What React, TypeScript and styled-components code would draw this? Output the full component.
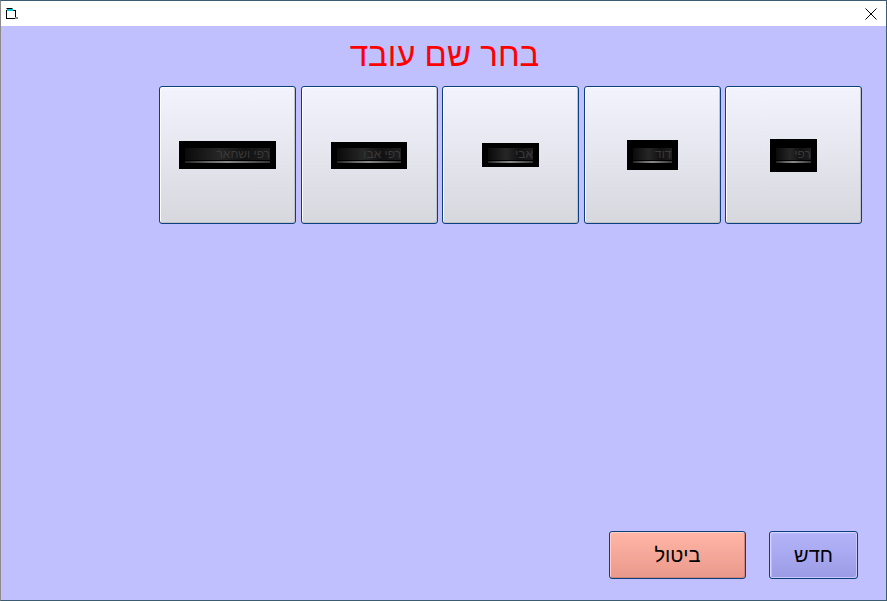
import React from "react";
import styled, { createGlobalStyle } from "styled-components";

const Global = createGlobalStyle`
  html, body { margin: 0; padding: 0; background: #ffffff; }
  body { font-family: "Liberation Sans", "DejaVu Sans", Arial, sans-serif; }
`;

const Window = styled.div`
  box-sizing: border-box;
  width: 887px;
  height: 601px;
  border: 1px solid #3c5a70;
  border-left-color: #8a8a8a;
  display: flex;
  flex-direction: column;
  background: #c0c0ff;
  overflow: hidden;
`;

const TitleBar = styled.div`
  height: 25px;
  flex: none;
  background: #ffffff;
  display: flex;
  align-items: center;
  justify-content: space-between;
  padding: 0 8px 0 4px;
`;

const CloseBtn = styled.div`
  width: 14px;
  height: 14px;
  display: flex;
  align-items: center;
  justify-content: center;
`;

const Content = styled.div`
  flex: 1;
  display: flex;
  flex-direction: column;
`;

const Heading = styled.div`
  direction: rtl;
  text-align: center;
  color: #ff0000;
  font-size: 33px;
  line-height: 36px;
  margin-top: 11px;
  padding-left: 2px;
`;

const EmployeeRow = styled.div`
  display: flex;
  flex-direction: row-reverse;
  gap: 4.5px;
  padding-right: 24px;
  margin-top: 13px;
`;

const EmployeeButton = styled.button`
  box-sizing: border-box;
  width: 137px;
  height: 138px;
  border: 1px solid #0d3f7c;
  border-radius: 3px;
  background: linear-gradient(#f2f3fd, #d7d8de);
  box-shadow: inset -1px -1px 0 #c0c2c8, inset 1px 1px 0 #ffffff;
  display: flex;
  align-items: center;
  justify-content: center;
  padding: 0;
`;

const NameImage = styled.div<{ $w: number; $h: number }>`
  width: ${(p) => p.$w}px;
  height: ${(p) => p.$h}px;
  background: #000;
  display: flex;
  flex-direction: column;
  justify-content: center;
  align-items: stretch;
  padding: 0 6px;
  box-sizing: border-box;
  overflow: hidden;
`;

const NameText = styled.div`
  direction: rtl;
  color: #3a3a3a;
  font-size: 12px;
  line-height: 12px;
  white-space: nowrap;
  overflow: hidden;
  text-align: right;
  background: linear-gradient(90deg, #0a0a0a 0%, #262626 40%, #111 70%, #1e1e1e 100%);
`;

const Streak = styled.div`
  height: 2px;
  margin-top: 1px;
  background: linear-gradient(90deg, #222 0%, #6a6a6a 30%, #8a8a8a 50%, #333 100%);
`;

const Spacer = styled.div`
  flex: 1;
`;

const Footer = styled.div`
  display: flex;
  flex-direction: row-reverse;
  gap: 23px;
  padding: 0 28px 21px 0;
`;

const ActionButton = styled.button<{ $variant: "new" | "cancel" }>`
  box-sizing: border-box;
  height: 48px;
  width: ${(p) => (p.$variant === "new" ? 89 : 137)}px;
  border: 1px solid #0d3f7c;
  border-radius: 3px;
  background: ${(p) =>
    p.$variant === "new"
      ? "linear-gradient(#b4b4fa, #9c9ce6)"
      : "linear-gradient(#ffb6a6, #ea998b)"};
  box-shadow: ${(p) =>
    p.$variant === "new"
      ? "inset 1px 1px 0 #d6d6ff, inset -1px -1px 0 #c8c8ff, inset 2px 2px 0 #b8b8fa"
      : "inset 1px 1px 0 #ffd0c4, inset -1px -1px 0 #d08478"};
  font-family: "Liberation Sans", "DejaVu Sans", Arial, sans-serif;
  font-size: 20px;
  color: #000;
  direction: rtl;
  padding: 0;
`;

const employees = [
  { name: "רפי", w: 47, h: 33 },
  { name: "דוד", w: 51, h: 30 },
  { name: "אבי", w: 57, h: 24 },
  { name: "רפי אבו", w: 76, h: 27 },
  { name: "רפי ושחאר", w: 97, h: 28 },
];

export default function App() {
  return (
    <>
      <Global />
      <Window>
        <TitleBar>
          <svg width="14" height="14" viewBox="0 0 14 14">
            <rect x="1.5" y="3.5" width="9" height="8" fill="#fff" stroke="#000" />
            <rect x="2" y="2" width="6" height="2" fill="#00c8d8" />
            <line x1="1.5" y1="1.5" x2="7.5" y2="1.5" stroke="#000" />
            <rect x="10" y="10" width="3" height="2" fill="#888" />
          </svg>
          <CloseBtn>
            <svg width="12" height="12" viewBox="0 0 12 12">
              <path d="M0.5 0.5 L11.5 11.5 M11.5 0.5 L0.5 11.5" stroke="#000" strokeWidth="1" />
            </svg>
          </CloseBtn>
        </TitleBar>
        <Content>
          <Heading>בחר שם עובד</Heading>
          <EmployeeRow>
            {employees.map((e, i) => (
              <EmployeeButton key={i}>
                <NameImage $w={e.w} $h={e.h}>
                  <NameText>{e.name}</NameText>
                  <Streak />
                </NameImage>
              </EmployeeButton>
            ))}
          </EmployeeRow>
          <Spacer />
          <Footer>
            <ActionButton $variant="new">חדש</ActionButton>
            <ActionButton $variant="cancel">ביטול</ActionButton>
          </Footer>
        </Content>
      </Window>
    </>
  );
}
